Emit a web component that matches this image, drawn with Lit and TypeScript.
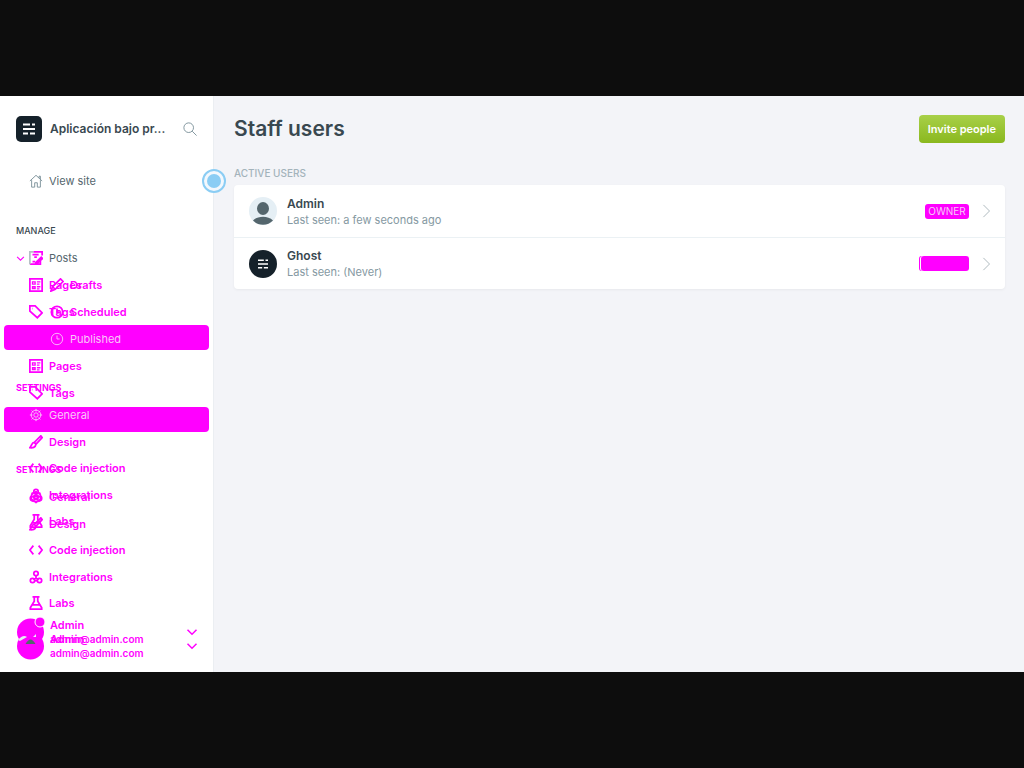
import { LitElement, html, css, svg } from "lit";
import { customElement, property } from "lit/decorators.js";

const icons: Record<string, unknown> = {
  home: svg`<path d="M1 8 8 1.500 15 8M3 7v8h3.500V10h3v5H13V7M11.500 4.500V2.500h1.500V6"/>`,
  search: svg`<circle cx="6.500" cy="6.500" r="5.500"/><path d="m10.500 10.500 5 5"/>`,
  posts: svg`<path d="M1 15h12V9M5 1h10v4M4 4h7M6 7h3M4 12h3M8 13l6-6 1.500 1.500-6 5.500-2 .500z"/><path stroke="#b5c0c5" d="M1 15V1h4"/>`,
  pages: svg`<path d="M1 1h14v14H1z"/><path stroke-width="1.500" d="M4 4.500h3V7H4zM9 4.500h4M9 7h3M4 10h3v2H4zM9 10h4M9 12.500h3"/>`,
  tags: svg`<path d="M1 1h6l8 8-5.500 5.500L1 7zM4 4h.500"/>`,
  gear: svg`<circle cx="8" cy="8" r="2.500"/><path d="M8 1v3M8 12v3M1 8h3M12 8h3M3 3l2 2M11 11l2 2M3 13l2-2M11 5l2-2"/><circle cx="8" cy="8" r="5.500"/>`,
  brush: svg`<path d="M13.500 1 6 8.500l2 2L15 3zM6 8.500c-3 0-2.500 3-5 6 3 .500 6.500 0 7-4"/>`,
  code: svg`<path d="M5 3 1 8l4 5M11 3l4 5-4 5"/>`,
  integrations: svg`<circle cx="8" cy="4" r="2.500"/><circle cx="4" cy="12" r="2.500"/><circle cx="12" cy="12" r="2.500"/><path d="M8 6v3l-3 2M8 9l3 2M6 12h4"/>`,
  labs: svg`<path d="M4 1h8M6 1v5L1.500 13.500V15h13v-1.500L10 6V1M4 10h8"/>`,
  clock: svg`<circle cx="8" cy="8" r="6.500"/><path d="M8 4v4h3"/>`,
  pencil: svg`<path d="M1 15l2-5 9-9 3 3-9 9zM3 10l3 3"/>`,
  down: svg`<path d="m2 5 6 6 6-6"/>`,
  right: svg`<path d="m5 1 7 7-7 7"/>`,
};
const icon = (name: string, cls = "") =>
  html`<svg class="icon ${cls}" viewBox="0 0 16 16" aria-hidden="true">${icons[name]}</svg>`;
const mark = html`<svg class="mark" viewBox="0 0 12 12" aria-hidden="true"><path d="M0 1.500h7M9 1.500h3M0 6h12M0 10.500h5M7 10.500h5"/></svg>`;
const person = html`<svg class="person" viewBox="0 0 28 28" aria-hidden="true"><circle cx="14" cy="14" r="14" fill="#e5eff5"/><ellipse cx="14" cy="11.500" rx="6" ry="6.500" fill="#54666d"/><path d="M4 23.500c5-5 15-5 20 0a14 14 0 0 1-20 0" fill="#54666d"/></svg>`;

@customElement("nav-layer")
class NavLayer extends LitElement {
  @property({ type: Boolean }) expanded = false;
  static styles = css`
    :host { display: grid; align-content: start; color: #f0f; }
    a { display: flex; align-items: center; height: 26px; margin: 0 4px; padding-left: 25px; gap: 6px; color: inherit; text-decoration: none; border-radius: 4px; font-size: 11px; font-weight: 600; white-space: nowrap; }
    .list { display: grid; row-gap: 1px; }
    .open { padding-bottom: 1px; }
    .spread { row-gap: 0; height: 132px; align-content: space-between; }
    .icon { width: 14px; height: 14px; flex: none; fill: none; stroke: currentColor; stroke-width: 2; }
    .sub { padding-left: 46px; }
    .active { background: #f0f; height: 25px; z-index: -1; }
    .ghosted { color: #f9c8f9; font-weight: 400; }
    .ghosted .icon { stroke-width: 1; }
    h2 { margin: 32px 16px 8px; font-size: 9px; line-height: 12px; font-weight: 700; }
  `;
  render() {
    const item = (n: string, t: string, c = "") => html`<a href="#" class=${c}>${icon(n)}<span>${t}</span></a>`;
    return html`
      ${this.expanded
        ? html`<div class="list open">${item("pencil", "Drafts", "sub")}${item("clock", "Scheduled", "sub")}
            ${item("clock", "Published", "sub ghosted")}${item("pages", "Pages")}${item("tags", "Tags")}</div>`
        : html`<div class="list">${item("pages", "Pages")}${item("tags", "Tags")}</div>`}
      <a href="#" class="active" aria-label="Staff"></a>
      <h2>SETTINGS</h2>
      <div class="list spread">
        ${item("gear", "General", this.expanded ? "" : "ghosted")}${item("brush", "Design")}
        ${item("code", "Code injection")}${item("integrations", "Integrations")}${item("labs", "Labs")}
      </div>`;
  }
}

@customElement("app-root")
class AppRoot extends LitElement {
  static styles = css`
    * { box-sizing: border-box; }
    :host { display: grid; grid-template-rows: 1fr auto 1fr; min-height: 100vh; background: #0d0d0d; font-family: Inter, sans-serif; color: #394850; }
    .frame { grid-row: 2; display: grid; grid-template-columns: 214px 1fr; min-height: 75vh; background: #f3f4f8; }
    aside { position: relative; display: flex; flex-direction: column; background: #fff; border-right: 1px solid #ebeef2; }
    .icon { width: 14px; height: 14px; flex: none; fill: none; stroke: currentColor; stroke-width: 1; }
    .brand { display: flex; align-items: center; height: 26px; margin: 20px 16px 0; gap: 8px; }
    .logo { display: grid; place-items: center; width: 26px; height: 26px; flex: none; border-radius: 5px; background: #15212a; }
    .mark { width: 12px; height: 12px; fill: none; stroke: #fff; stroke-width: 2; }
    .name { flex: 1; font-size: 12px; line-height: 20px; font-weight: 600; white-space: nowrap; }
    .plain { border: 0; padding: 0; background: none; color: #738a94; display: flex; }
    .view { display: flex; align-items: center; gap: 6px; height: 26px; margin: 26px 4px 0; padding-left: 25px; font-size: 11px; color: #54666d; text-decoration: none; }
    .view .icon { color: #738a94; }
    .heading { margin: 31px 16px 0; font-size: 9px; line-height: 12px; font-weight: 500; }
    .posts { display: flex; align-items: center; height: 26px; margin: 8px 4px 0; padding-left: 12px; gap: 4px; font-size: 11px; color: #54666d; text-decoration: none; }
    .posts .icon { color: #f0f; stroke-width: 2; }
    .posts .chev { width: 9px; height: 9px; }
    .posts span { padding-left: 2px; }
    .layers { display: grid; padding-top: 1px; isolation: isolate; }
    .layers > * { grid-area: 1 / 1; }
    .ring { position: absolute; top: 73px; right: -13px; width: 24px; height: 24px; border: 2px solid #8bcdf4; border-radius: 50%; background: #f3f8fd; padding: 3px; }
    .ring::after { content: ""; display: block; width: 100%; height: 100%; border-radius: 50%; background: #8bcdf4; }
    footer { position: absolute; inset: auto 15px 12px 16px; display: grid; grid-template-columns: 28px 1fr 12px; column-gap: 6px; align-items: center; color: #f0f; font-weight: 600; }
    .face { width: 28px; height: 42px; overflow: visible; }
    .who { display: grid; font-size: 10px; line-height: 14px; }
    .who b { font-size: 11px; font-weight: 600; }
    .over { display: grid; }
    .over > * { grid-area: 1 / 1; }
    .chevs { display: grid; gap: 2px; }
    .chevs .icon { width: 12px; height: 12px; stroke-width: 2; }
    main { padding: 18px 19px 0 20px; min-width: 0; }
    header { display: flex; justify-content: space-between; align-items: center; height: 30px; }
    h1 { margin: 0; font-size: 21px; line-height: 32px; font-weight: 600; }
    .invite { height: 28px; padding: 0 9px; border: 0; border-radius: 4px; background: linear-gradient(#a8d049, #8ab81f); color: #fff; font: 600 11px/28px Inter, sans-serif; }
    .label { margin: 23px 0 5px; font-size: 10px; line-height: 13px; font-weight: 500; color: #a3b3bb; }
    .card { margin: 0; padding: 0; list-style: none; background: #fff; border-radius: 4px; box-shadow: 0 1px 3px #0000000d; }
    .row { display: flex; align-items: center; height: 52px; padding: 0 12px 0 15px; gap: 10px; color: inherit; text-decoration: none; }
    li + li .row { border-top: 1px solid #ebf1f4; }
    .row > .icon { color: #a3b0b6; }
    .person, .round { width: 28px; height: 28px; flex: none; }
    .round { display: grid; place-items: center; border-radius: 50%; background: #15212a; }
    .round .mark { width: 10px; height: 10px; }
    .text { flex: 1; }
    h3 { margin: 0; font-size: 12px; line-height: 17px; font-weight: 600; }
    .text p { margin: 0; font-size: 11px; line-height: 16px; color: #8599a2; }
    .badge { display: grid; place-items: center; height: 15px; width: 44px; border-radius: 3px; background: #f0f; color: #f9c8f9; font-size: 10px; }
    .wide { width: 50px; box-shadow: inset 1px 0 #f0f, inset 2px 0 #fff; }
  `;
  render() {
    return html`<div class="frame">
      <aside>
        <div class="brand"><span class="logo">${mark}</span><span class="name">Aplicación bajo pr...</span><button class="plain" aria-label="Search">${icon("search")}</button></div>
        <a class="view" href="#">${icon("home")}View site</a>
        <div class="heading">MANAGE</div>
        <a class="posts" href="#">${icon("down", "chev")}${icon("posts")}<span>Posts</span></a>
        <div class="layers"><nav-layer></nav-layer><nav-layer expanded></nav-layer></div>
        <button class="plain ring" aria-label="Toggle menu"></button>
        <footer>
          <svg class="face" viewBox="0 0 28 42" aria-hidden="true"><circle cx="14.500" cy="14" r="13.500" fill="#f0f"/><circle cx="14.500" cy="28" r="13.500" fill="#f0f"/><path fill="#e5eff5" d="M2 22q5-6 9-3l-7 4zM17 19l3-3v3z"/><path fill="#54666d" d="M9.500 26q5-9 10 0z"/><circle cx="24" cy="4" r="5" fill="#f0f" stroke="#fff"/></svg>
          <div class="who"><b>Admin</b><div class="over"><span>admin@admin.com</span><b>Admin</b></div><span>admin@admin.com</span></div>
          <div class="chevs">${icon("down")}${icon("down")}</div>
        </footer>
      </aside>
      <main>
        <header><h1>Staff users</h1><button class="invite">Invite people</button></header>
        <div class="label">ACTIVE USERS</div>
        <ul class="card">
          <li><a class="row" href="#">${person}<div class="text"><h3>Admin</h3><p>Last seen: a few seconds ago</p></div><span class="badge">OWNER</span>${icon("right")}</a></li>
          <li><a class="row" href="#"><span class="round">${mark}</span><div class="text"><h3>Ghost</h3><p>Last seen: (Never)</p></div><span class="badge wide"></span>${icon("right")}</a></li>
        </ul>
      </main>
    </div>`;
  }
}
